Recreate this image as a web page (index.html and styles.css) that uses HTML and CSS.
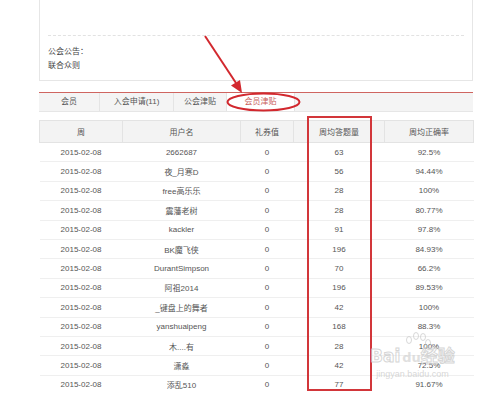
FILE: index.html
```html
<!DOCTYPE html>
<html lang="zh-CN">
<head>
  <meta charset="UTF-8" />
  <title>会员津贴</title>
  <link rel="stylesheet" href="styles.css">
</head>
<body>
  <div class="page">
    <div class="notice-card">
      <div class="dashed"></div>
      <p class="notice-title">公会公告：</p>
      <p class="notice-text">联合众则</p>
    </div>

    <div class="tabs">
      <div class="tab tab-member">会员</div>
      <div class="tab tab-apply">入会申请(11)</div>
      <div class="tab tab-guild">公会津贴</div>
      <div class="tab tab-active">会员津贴</div>
    </div>

    <table class="stats">
      <colgroup>
        <col class="c-week"><col class="c-user"><col class="c-gift"><col class="c-count"><col class="c-rate">
      </colgroup>
      <thead>
        <tr><th>周</th><th>用户名</th><th>礼券值</th><th>周均答题量</th><th>周均正确率</th></tr>
      </thead>
      <tbody>
        <tr><td>2015-02-08</td><td>2662687</td><td>0</td><td>63</td><td>92.5%</td></tr>
        <tr><td>2015-02-08</td><td>夜_月寒D</td><td>0</td><td>56</td><td>94.44%</td></tr>
        <tr><td>2015-02-08</td><td>free高乐乐</td><td>0</td><td>28</td><td>100%</td></tr>
        <tr><td>2015-02-08</td><td>震藩老树</td><td>0</td><td>28</td><td>80.77%</td></tr>
        <tr><td>2015-02-08</td><td>kackler</td><td>0</td><td>91</td><td>97.8%</td></tr>
        <tr><td>2015-02-08</td><td>BK魔飞侠</td><td>0</td><td>196</td><td>84.93%</td></tr>
        <tr><td>2015-02-08</td><td>DurantSimpson</td><td>0</td><td>70</td><td>66.2%</td></tr>
        <tr><td>2015-02-08</td><td>阿祖2014</td><td>0</td><td>196</td><td>89.53%</td></tr>
        <tr><td>2015-02-08</td><td>_键盘上的舞者</td><td>0</td><td>42</td><td>100%</td></tr>
        <tr><td>2015-02-08</td><td>yanshuaipeng</td><td>0</td><td>168</td><td>88.3%</td></tr>
        <tr><td>2015-02-08</td><td>木....有</td><td>0</td><td>28</td><td>100%</td></tr>
        <tr><td>2015-02-08</td><td>潇淼</td><td>0</td><td>42</td><td>72.5%</td></tr>
        <tr><td>2015-02-08</td><td>添乱510</td><td>0</td><td>77</td><td>91.67%</td></tr>
      </tbody>
    </table>
  </div>

  <!-- annotation layer: arrow, ellipse and highlight box drawn over the page -->
  <svg class="marks" width="480" height="394" viewBox="0 0 480 394">
    <line x1="205" y1="36" x2="236" y2="83" stroke="#d2282e" stroke-width="2" />
    <polygon points="242,93 231,85.5 240,80" fill="#d2282e" />
    <ellipse cx="263.5" cy="102" rx="36" ry="8.5" fill="none" stroke="#d2282e" stroke-width="2" />
    <rect x="308" y="117" width="63" height="273" fill="none" stroke="#d2363a" stroke-width="2" />
    <!-- watermark paw -->
    <g fill="none" stroke="rgba(200,200,200,0.7)" stroke-width="1">
      <ellipse cx="409" cy="340" rx="2.5" ry="3.5" />
      <ellipse cx="416" cy="336" rx="2.5" ry="3.5" />
      <ellipse cx="423" cy="337" rx="2.5" ry="3.5" />
      <ellipse cx="428" cy="343" rx="2.5" ry="3.5" />
    </g>
  </svg>

  <div class="watermark">
    <div class="wm-logo">Bai<span class="wm-du">du</span>经验</div>
    <div class="wm-url">jingyan.baidu.com</div>
  </div>
</body>
</html>
```

FILE: styles.css
```css
* {
  margin: 0;
  padding: 0;
  box-sizing: border-box;
}

body {
  background: #fff;
  font-family: 'Liberation Sans', 'Noto Sans CJK SC', sans-serif;
  font-size: 8px;
  color: #555;
  width: 480px;
  height: 394px;
  overflow: hidden;
  position: relative;
}

.page {
  margin-left: 39px;
  width: 434px;
}

.notice-card {
  height: 81px;
  border: 1px solid #e6e6e6;
  border-top: none;
  padding: 35px 8px 0;
}

.dashed {
  border-top: 1px dashed #e2e2e2;
  margin-bottom: 9px;
}

.notice-title,
.notice-text {
  line-height: 14px;
  color: #444;
}

.tabs {
  display: flex;
  margin-top: 11px;
  height: 20px;
  border-top: 1px solid #cf6560;
  border-bottom: 1px solid #e6e6e6;
  background: #f4f4f4;
}

.tab {
  line-height: 18px;
  text-align: center;
  border-right: 1px solid #e4e4e4;
  color: #555;
}

.tab-member { width: 61px; }
.tab-apply { width: 74px; }
.tab-guild { width: 53px; }

.tab-active {
  width: 68px;
  background: #fff;
  color: #c9605a;
}

.stats {
  margin-top: 8px;
  width: 434px;
  border-collapse: collapse;
  table-layout: fixed;
}

.c-week { width: 83px; }
.c-user { width: 118px; }
.c-gift { width: 53px; }
.c-count { width: 91px; }
.c-rate { width: 89px; }

.stats th {
  height: 22px;
  background: #f3f3f3;
  border: 1px solid #e3e3e3;
  font-weight: normal;
  color: #555;
}

.stats td {
  height: 19.4px;
  text-align: center;
  border-bottom: 1px solid #efefef;
  color: #555;
}

.marks {
  position: absolute;
  left: 0;
  top: 0;
}

.watermark {
  position: absolute;
  left: 370px;
  top: 345px;
  text-align: center;
}

.wm-logo {
  font-family: 'DejaVu Sans', 'Noto Sans CJK SC', sans-serif;
  font-size: 17px;
  font-weight: bold;
  line-height: 22px;
  color: rgba(255, 255, 255, 0.4);
  -webkit-text-stroke: 1px rgba(200, 200, 200, 0.75);
}

.wm-du {
  margin-left: 2px;
  color: rgba(210, 210, 210, 0.7);
  -webkit-text-stroke: 0;
  font-size: 13px;
}

.wm-url {
  font-size: 9px;
  line-height: 11px;
  color: rgba(205, 205, 205, 0.8);
}
```
